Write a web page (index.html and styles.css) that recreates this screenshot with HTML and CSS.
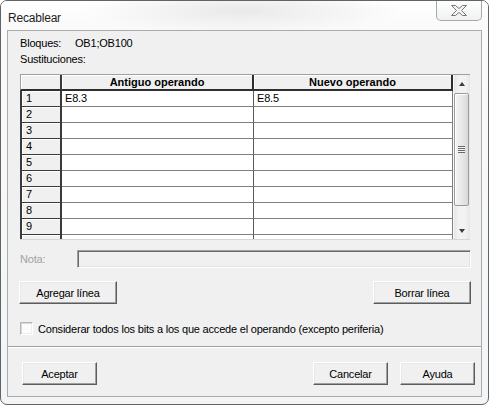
FILE: index.html
```html
<!DOCTYPE html>
<html lang="es">
<head>
<meta charset="utf-8">
<title>Recablear</title>
<link rel="stylesheet" href="styles.css">
</head>
<body>
<div class="window">
  <div class="titlebar">
    <span class="title">Recablear</span>
    <div class="close">
      <svg width="16" height="11" viewBox="0 0 16 11"><polygon points="0.5,0.5 4.5,0.5 8,3.5 11.5,0.5 15.5,0.5 10.5,5.5 15.5,10.5 11.5,10.5 8,7.5 4.5,10.5 0.5,10.5 5.5,5.5" fill="#f4f4f4" stroke="#767676" stroke-width="1" stroke-linejoin="round"/></svg>
    </div>
  </div>
  <div class="client">
    <div class="info">
      <div class="line"><span class="lbl">Bloques:</span><span>OB1;OB100</span></div>
      <div class="line">Sustituciones:</div>
    </div>
    <div class="grid">
      <div class="cells">
        <div class="row head"><div class="rh"></div><div class="c1">Antiguo operando</div><div class="c2">Nuevo operando</div></div>
        <div class="row"><div class="rh">1</div><div class="c1">E8.3</div><div class="c2">E8.5</div></div>
        <div class="row"><div class="rh">2</div><div class="c1"></div><div class="c2"></div></div>
        <div class="row"><div class="rh">3</div><div class="c1"></div><div class="c2"></div></div>
        <div class="row"><div class="rh">4</div><div class="c1"></div><div class="c2"></div></div>
        <div class="row"><div class="rh">5</div><div class="c1"></div><div class="c2"></div></div>
        <div class="row"><div class="rh">6</div><div class="c1"></div><div class="c2"></div></div>
        <div class="row"><div class="rh">7</div><div class="c1"></div><div class="c2"></div></div>
        <div class="row"><div class="rh">8</div><div class="c1"></div><div class="c2"></div></div>
        <div class="row"><div class="rh">9</div><div class="c1"></div><div class="c2"></div></div>
        <div class="row"><div class="rh"></div><div class="c1"></div><div class="c2"></div></div>
      </div>
      <div class="vscroll">
        <div class="sbtn"><span class="arrow-up"></span></div>
        <div class="thumb"><span class="grip"></span></div>
        <div class="track"></div>
        <div class="sbtn"><span class="arrow-down"></span></div>
      </div>
    </div>
    <div class="nota">
      <span class="nota-lbl">Nota:</span>
      <div class="input"></div>
    </div>
    <div class="btnrow">
      <button class="btn wide">Agregar línea</button>
      <button class="btn wide">Borrar línea</button>
    </div>
    <div class="check">
      <span class="box"></span>
      <span>Considerar todos los bits a los que accede el operando (excepto periferia)</span>
    </div>
    <div class="sep"></div>
    <div class="footer">
      <button class="btn">Aceptar</button>
      <span class="spacer"></span>
      <button class="btn">Cancelar</button>
      <button class="btn">Ayuda</button>
    </div>
  </div>
</div>
</body>
</html>
```
FILE: styles.css
```css
html, body {
  margin: 0;
  padding: 0;
  background: #ffffff;
}
body {
  font-family: "Liberation Sans", Arial, sans-serif;
  font-size: 11px;
  letter-spacing: -0.2px;
  color: #000;
}
.window {
  width: 489px;
  height: 405px;
  box-sizing: border-box;
  border: 1px solid #5f6468;
  border-radius: 7px;
  background: linear-gradient(180deg, #fbfbfb 0%, #f3f4f5 100%);
  overflow: hidden;
  display: flex;
  flex-direction: column;
}
.titlebar {
  height: 29px;
  display: flex;
  align-items: flex-start;
  padding-left: 7px;
  background: radial-gradient(ellipse 160px 22px at 240px 10px, #e9e9e9 0%, rgba(250,250,250,0) 100%), linear-gradient(180deg, #ffffff, #f9f9f9);
}
.title {
  font-size: 12px;
  letter-spacing: -0.2px;
  margin-top: 10px;
  color: #1e1e1e;
}
.close {
  margin-left: auto;
  margin-right: 6px;
  margin-top: -1px;
  width: 46px;
  height: 21px;
  box-sizing: border-box;
  border: 1px solid #a7a9ac;
  border-top: none;
  border-radius: 0 0 5px 5px;
  background: linear-gradient(180deg, #ffffff 0%, #f0f1f2 100%);
  display: flex;
  align-items: center;
  justify-content: center;
}
.close svg { display: block; margin-top: 1px; }
.client {
  margin: 0 6px;
  height: 367px;
  box-sizing: border-box;
  border: 1px solid #a9abae;
  background: #f0f0f0;
  display: flex;
  flex-direction: column;
}
.info {
  padding: 4px 0 0 12px;
}
.line {
  height: 16px;
  line-height: 16px;
  display: flex;
}
.lbl { width: 55px; }

.grid {
  margin: 7px 0 0 12px;
  width: 450px;
  height: 166px;
  box-sizing: border-box;
  border-top: 1px solid #a0a0a0;
  border-bottom: 1px solid #d6d6d6;
  display: flex;
  background: #fff;
}
.cells {
  width: 433px;
  overflow: hidden;
}
.row {
  display: grid;
  grid-template-columns: 42px 192px 199px;
  height: 16px;
}
.row > div {
  box-sizing: border-box;
  height: 16px;
  line-height: 15px;
  white-space: nowrap;
  overflow: hidden;
}
.rh {
  background: #f0f0f0;
  border-left: 2px solid #3a3a3a;
  border-right: 2px solid #3a3a3a;
  border-bottom: 1px solid #3a3a3a;
  box-shadow: inset 1px 1px #ffffff;
  padding-left: 4px;
}
.c1 {
  border-right: 1px solid #5a5a5a;
  border-bottom: 1px solid #808080;
  padding-left: 3px;
}
.c2 {
  border-right: 1px solid #808080;
  border-bottom: 1px solid #808080;
  padding-left: 3px;
}
.head > div {
  background: #f0f0f0;
  border-bottom: 2px solid #2e2e2e;
  box-shadow: inset 1px 1px #ffffff;
  font-weight: bold;
  text-align: center;
  line-height: 14px;
  letter-spacing: 0;
}
.head .c1, .head .c2 {
  border-right: 2px solid #2e2e2e;
  padding-left: 0;
}
.head .rh {
  border-left: 1px solid #a0a0a0;
  border-bottom: 2px solid #2e2e2e;
}
.vscroll {
  width: 17px;
  background: linear-gradient(90deg, #e6e6e6 0%, #f2f2f2 30%, #f2f2f2 70%, #e6e6e6 100%);
  border-left: 1px solid #f8f8f8;
  box-sizing: border-box;
  display: flex;
  flex-direction: column;
}
.sbtn {
  height: 17px;
  display: flex;
  align-items: center;
  justify-content: center;
  flex: none;
}
.arrow-up {
  width: 0; height: 0;
  border-left: 3.5px solid transparent;
  border-right: 3.5px solid transparent;
  border-bottom: 4px solid #3c3c3c;
}
.arrow-down {
  width: 0; height: 0;
  border-left: 3.5px solid transparent;
  border-right: 3.5px solid transparent;
  border-top: 4px solid #3c3c3c;
}
.thumb {
  margin: 1px 0 0 0;
  width: 15px;
  height: 113px;
  box-sizing: border-box;
  border: 1px solid #9a9a9a;
  border-radius: 2px;
  background: linear-gradient(90deg, #f4f4f4 0%, #e9e9e9 50%, #d9d9d9 100%);
  box-shadow: inset 1px 1px #fff;
  display: flex;
  align-items: center;
  justify-content: center;
  flex: none;
}
.grip {
  width: 7px;
  height: 7px;
  background: repeating-linear-gradient(180deg, #6a6a6a 0, #6a6a6a 1px, #f4f4f4 1px, #f4f4f4 2px);
}
.track { flex: 1; }

.nota {
  margin: 10px 0 0 12px;
  display: flex;
  align-items: center;
  height: 18px;
}
.nota-lbl {
  width: 57px;
  color: #a3a3a3;
}
.input {
  width: 394px;
  height: 18px;
  box-sizing: border-box;
  border-top: 1px solid #a0a0a0;
  border-left: 1px solid #a0a0a0;
  border-right: 1px solid #ffffff;
  border-bottom: 1px solid #ffffff;
  box-shadow: inset 1px 1px #6a6a6a, inset -1px -1px #e3e3e3;
  background: #f0f0f0;
}
.btnrow {
  margin: 13px 10px 0 11px;
  display: flex;
  justify-content: space-between;
}
.btn {
  font: inherit;
  letter-spacing: inherit;
  color: #000;
  width: 75px;
  height: 23px;
  padding: 0;
  box-sizing: border-box;
  background: #f0f0f0;
  border-top: 1px solid #ffffff;
  border-left: 1px solid #ffffff;
  border-right: 1px solid #5c5c5c;
  border-bottom: 1px solid #5c5c5c;
  box-shadow: inset -1px -1px #a0a0a0, inset 1px 1px #e8e8e8;
}
.btn.wide { width: 98px; }
.check {
  margin: 18px 0 0 12px;
  display: flex;
  align-items: center;
  height: 13px;
}
.box {
  width: 13px;
  height: 13px;
  box-sizing: border-box;
  margin-right: 5px;
  background: #fcfcfc;
  border-top: 1px solid #b5b5b5;
  border-left: 1px solid #b5b5b5;
  border-right: 1px solid #ffffff;
  border-bottom: 1px solid #ffffff;
  box-shadow: inset 1px 1px #d8d8d8, inset -1px -1px #eeeeee;
}
.sep {
  margin-top: 11px;
  height: 1px;
  background: #a0a0a0;
  border-bottom: 1px solid #ffffff;
}
.footer {
  margin: 14px 6px 0 14px;
  display: flex;
  gap: 12px;
}
.footer .spacer { flex: 1; }
```
